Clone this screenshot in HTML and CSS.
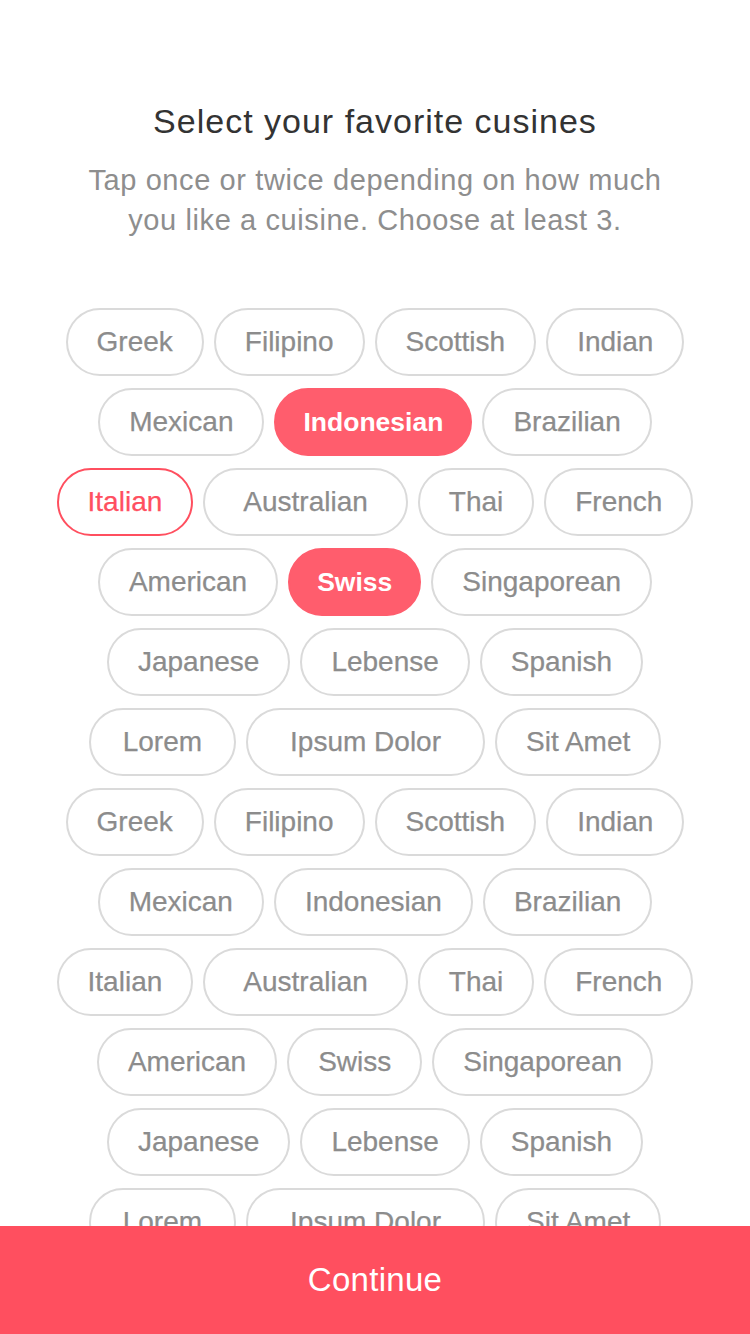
FILE: index.html
```html
<!DOCTYPE html>
<html lang="en">
<head>
<meta charset="utf-8">
<title>Select your favorite cusines</title>
<link rel="stylesheet" href="styles.css">
</head>
<body>
<div class="screen">
  <main class="content">
    <header class="intro">
      <h1 class="title">Select your favorite cusines</h1>
      <p class="subtitle">Tap once or twice depending on how much<br>you like a cuisine. Choose at least 3.</p>
    </header>
    <div class="chips">
      <div class="row"><span class="chip">Greek</span><span class="chip">Filipino</span><span class="chip">Scottish</span><span class="chip">Indian</span></div>
      <div class="row"><span class="chip">Mexican</span><span class="chip selected">Indonesian</span><span class="chip">Brazilian</span></div>
      <div class="row"><span class="chip liked">Italian</span><span class="chip wide">Australian</span><span class="chip">Thai</span><span class="chip">French</span></div>
      <div class="row"><span class="chip">American</span><span class="chip selected">Swiss</span><span class="chip">Singaporean</span></div>
      <div class="row"><span class="chip">Japanese</span><span class="chip">Lebense</span><span class="chip">Spanish</span></div>
      <div class="row"><span class="chip roomy">Lorem</span><span class="chip wider">Ipsum Dolor</span><span class="chip">Sit Amet</span></div>
      <div class="row"><span class="chip">Greek</span><span class="chip">Filipino</span><span class="chip">Scottish</span><span class="chip">Indian</span></div>
      <div class="row"><span class="chip">Mexican</span><span class="chip">Indonesian</span><span class="chip">Brazilian</span></div>
      <div class="row"><span class="chip">Italian</span><span class="chip wide">Australian</span><span class="chip">Thai</span><span class="chip">French</span></div>
      <div class="row"><span class="chip">American</span><span class="chip">Swiss</span><span class="chip">Singaporean</span></div>
      <div class="row"><span class="chip">Japanese</span><span class="chip">Lebense</span><span class="chip">Spanish</span></div>
      <div class="row"><span class="chip roomy">Lorem</span><span class="chip wider">Ipsum Dolor</span><span class="chip">Sit Amet</span></div>
    </div>
  </main>
  <button class="continue" type="button">Continue</button>
</div>
</body>
</html>
```
FILE: styles.css
```css
* { box-sizing: border-box; }
html, body { margin: 0; padding: 0; background: #fff; }
body { font-family: "Liberation Sans", Arial, sans-serif; }
.screen {
  width: 750px;
  height: 1334px;
  display: flex;
  flex-direction: column;
  overflow: hidden;
}
.content {
  flex: 1;
  overflow: hidden;
  padding-top: 101px;
}
.intro { text-align: center; }
.title {
  margin: 0;
  font-size: 34px;
  line-height: 40px;
  font-weight: 400;
  letter-spacing: 1px;
  color: #333;
}
.subtitle {
  margin: 19px 0 0;
  font-size: 29px;
  line-height: 40px;
  letter-spacing: 0.6px;
  color: #8e8e8e;
}
.chips {
  margin-top: 68px;
  display: flex;
  flex-direction: column;
  gap: 12px;
}
.row {
  display: flex;
  justify-content: center;
  gap: 10px;
}
.chip {
  height: 68px;
  padding: 0 29px;
  border: 2px solid #dadada;
  border-radius: 34px;
  display: flex;
  align-items: center;
  font-size: 28px;
  color: #8c8c8c;
  -webkit-text-stroke: 0.25px currentColor;
  white-space: nowrap;
}
.chip.roomy { padding: 0 32px; }
.chip.wide { padding: 0 38px; }
.chip.wider { padding: 0 42px; }
.chip.selected {
  background: #ff5d6d;
  border-color: #ff5d6d;
  color: #fff;
  font-weight: 700;
  font-size: 26.5px;
  padding: 0 27px;
  -webkit-text-stroke: 0;
}
.chip.liked {
  border-color: #ff4f5f;
  color: #ff4f5f;
}
.continue {
  flex: 0 0 108px;
  width: 100%;
  border: 0;
  margin: 0;
  background: #ff4f5f;
  color: #fff;
  font-family: "Liberation Sans", Arial, sans-serif;
  font-size: 33px;
  letter-spacing: 0.3px;
  padding: 0;
}
```
